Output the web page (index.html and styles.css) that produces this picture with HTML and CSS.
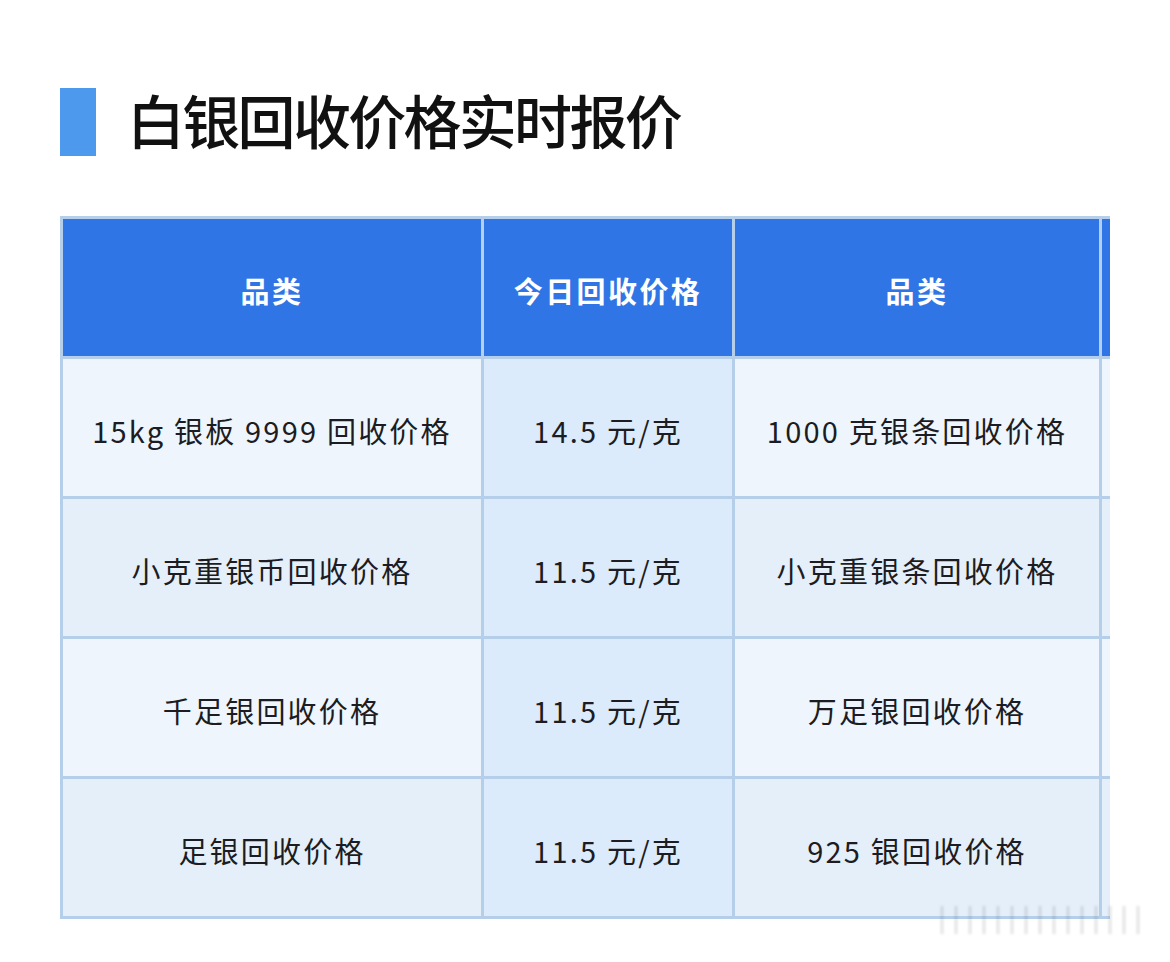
FILE: index.html
```html
<!DOCTYPE html>
<html lang="zh-CN">
<head>
<meta charset="utf-8">
<title>白银回收价格实时报价</title>
<link rel="stylesheet" href="styles.css">
</head>
<body>
<div class="page">
  <h1 class="title"><span class="bar"></span><span class="title-text">白银回收价格实时报价</span></h1>
  <div class="table-wrap">
    <div class="grid">
      <div class="cell head">品类</div>
      <div class="cell head">今日回收价格</div>
      <div class="cell head">品类</div>
      <div class="cell head"></div>

      <div class="cell odd">15kg 银板 9999 回收价格</div>
      <div class="cell price">14.5 元/克</div>
      <div class="cell odd">1000 克银条回收价格</div>
      <div class="cell odd"></div>

      <div class="cell even">小克重银币回收价格</div>
      <div class="cell price">11.5 元/克</div>
      <div class="cell even">小克重银条回收价格</div>
      <div class="cell even"></div>

      <div class="cell odd">千足银回收价格</div>
      <div class="cell price">11.5 元/克</div>
      <div class="cell odd">万足银回收价格</div>
      <div class="cell odd"></div>

      <div class="cell even">足银回收价格</div>
      <div class="cell price">11.5 元/克</div>
      <div class="cell even">925 银回收价格</div>
      <div class="cell even"></div>
    </div>
  </div>
  <div class="watermark"></div>
</div>
</body>
</html>
```

FILE: styles.css
```css
html, body {
  margin: 0;
  padding: 0;
  background: #ffffff;
}

body {
  font-family: "Noto Sans CJK SC", "Noto Sans", sans-serif;
  color: #1b1b1f;
}

.page {
  position: relative;
  width: 1170px;
  height: 962px;
  overflow: hidden;
}

.title {
  display: flex;
  align-items: center;
  gap: 31px;
  margin: 0;
  padding: 88px 0 0 60px;
  height: 68px;
  font-size: 58px;
  font-weight: 500;
  letter-spacing: -2.7px;
  color: #111111;
  line-height: 68px;
}

.bar {
  display: block;
  width: 36px;
  height: 68px;
  background: #4d99ee;
}

.title-text {
  position: relative;
  top: -3px;
}

.table-wrap {
  margin: 60px 0 0 60px;
  width: 1050px;
  overflow: hidden;
}

.grid {
  display: grid;
  grid-template-columns: 418px 248px 364px 364px;
  grid-auto-rows: 137px;
  gap: 3px;
  padding: 3px;
  width: max-content;
  background: #b5cfea;
}

.cell {
  display: flex;
  align-items: center;
  justify-content: center;
  padding-top: 4px;
  box-sizing: border-box;
  font-size: 29px;
  letter-spacing: 2.2px;
  color: #1c1c22;
  white-space: nowrap;
}

.head {
  background: #2f75e6;
  color: #ffffff;
  font-weight: 700;
  font-size: 29px;
  letter-spacing: 2.4px;
}

.odd {
  background: #eef5fd;
}

.even {
  background: #e5effa;
}

.price {
  background: #dcebfc;
}

.watermark {
  position: absolute;
  left: 935px;
  top: 906px;
  width: 210px;
  height: 28px;
  background:
    repeating-linear-gradient(90deg, rgba(60,60,60,0.0) 0 6px, rgba(60,60,60,0.35) 6px 8px, rgba(60,60,60,0) 8px 14px);
  filter: blur(1.5px);
  opacity: 0.6;
}
```
